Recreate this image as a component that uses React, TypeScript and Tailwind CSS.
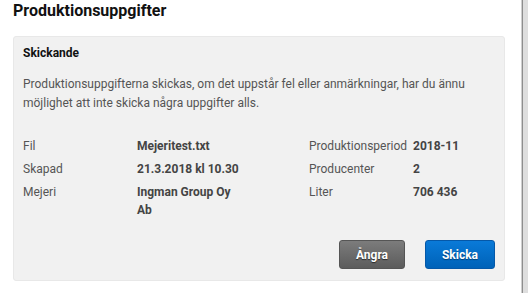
import React from "react";

export default function App() {
  const rows: [string, string, string, string][] = [
    ["Fil", "Mejeritest.txt", "Produktionsperiod", "2018-11"],
    ["Skapad", "21.3.2018 kl 10.30", "Producenter", "2"],
    ["Mejeri", "Ingman Group Oy Ab", "Liter", "706 436"],
  ];
  return (
    <div
      className="w-[528px] h-[293px] bg-white flex overflow-hidden"
      style={{ fontFamily: "Roboto, 'Liberation Sans', sans-serif" }}
    >
      <div className="w-[521px] flex flex-col pl-[13px] pr-[16px]">
        <h1 className="text-[16px] leading-[20px] font-bold text-[#111] pt-[1px] h-[36px]">
          Produktionsuppgifter
        </h1>
        <div className="h-[245px] bg-[#f1f1f1] border border-[#e8e8e8] rounded-[3px] px-[9px] pt-[8px] flex flex-col">
          <div className="text-[12px] leading-[16px] font-bold text-[#111]">Skickande</div>
          <p className="mt-[14px] text-[12px] leading-[19px] text-[#555] pr-[20px]">
            Produktionsuppgifterna skickas, om det uppstår fel eller anmärkningar, har du ännu möjlighet att inte skicka några uppgifter alls.
          </p>
          <div className="mt-[24px] grid grid-cols-[114px_172px_104px_1fr] gap-y-[5px] text-[12px] leading-[18px]">
            {rows.map((r) => (
              <React.Fragment key={r[0]}>
                <div className="text-[#555]">{r[0]}</div>
                <div className="font-bold text-[#444] w-[104px]">{r[1]}</div>
                <div className="text-[#555]">{r[2]}</div>
                <div className="font-bold text-[#444]">{r[3]}</div>
              </React.Fragment>
            ))}
          </div>
          <div className="mt-auto mb-[11px] flex justify-end gap-[20px]">
            <button
              className="w-[66px] h-[29px] rounded-[3px] border border-[#555] bg-gradient-to-b from-[#7c7c7c] to-[#5c5c5c] text-white text-[12px] font-bold"
              style={{ textShadow: "0 1px 1px rgba(0,0,0,0.6)" }}
            >
              Ångra
            </button>
            <button
              className="w-[70px] h-[29px] rounded-[3px] border border-[#0558a8] bg-gradient-to-b from-[#0a7ad8] to-[#0062b8] text-white text-[12px] font-bold"
              style={{ textShadow: "0 1px 1px rgba(0,0,0,0.4)" }}
            >
              Skicka
            </button>
          </div>
        </div>
      </div>
      <div className="w-[1px] h-full bg-[#cfcfcf]" />
      <div className="w-[1px] h-full bg-[#8e8e8e]" />
      <div className="flex-1 h-full bg-[#dedede]" />
    </div>
  );
}
